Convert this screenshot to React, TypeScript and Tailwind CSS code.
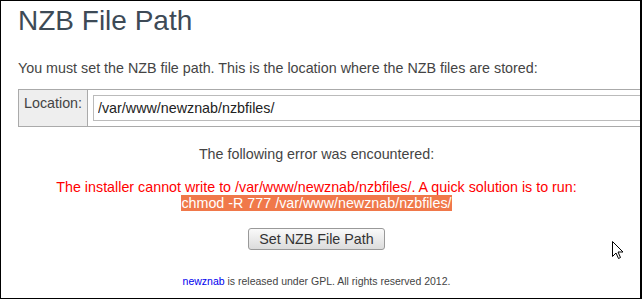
import React from "react";

export default function App() {
  return (
    <div className="relative h-[301px] w-[643px] overflow-hidden bg-white font-['Liberation_Sans',Arial,sans-serif]">
      <div className="h-[299px] w-[642px] overflow-hidden border border-r-2 border-black">
        <div className="pl-[17px]">
          <h1 className="pt-[3px] text-[28px] leading-[33px] text-[#3d4a56]">NZB File Path</h1>

          <p className="mt-[23px] text-[14.3px] leading-[16px] text-[#444]">
            You must set the NZB file path. This is the location where the NZB files are stored:
          </p>

          <div className="mt-[13px] flex h-[38px] w-[700px] border border-[#aaa]">
            <div className="flex w-[69px] shrink-0 items-start border-r border-[#aaa] bg-[#eee] pl-[5px] pt-[5px] text-[14.3px] leading-[16px] text-[#444]">
              Location:
            </div>
            <div className="flex-1 px-[5px] py-[5px]">
              <input
                readOnly
                value="/var/www/newznab/nzbfiles/"
                className="h-[26px] w-full border border-[#bbb] bg-white px-[4px] text-[14.3px] text-[#222] outline-none"
              />
            </div>
          </div>
        </div>

        <div className="pr-[8px] text-center">
          <p className="mt-[19px] text-[14.3px] leading-[16px] text-[#444]">The following error was encountered:</p>
          <p className="mt-[17px] text-[14.3px] leading-[16px] text-[#ff0000]">
            The installer cannot write to /var/www/newznab/nzbfiles/. A quick solution is to run:
            <br />
            <span className="bg-[#f0784a] text-white">chmod -R 777 /var/www/newznab/nzbfiles/</span>
          </p>
          <button className="mt-[17px] h-[22px] rounded-[3px] border border-[#999] bg-gradient-to-b from-[#fafafa] to-[#dcdcdc] px-[10px] text-[14.3px] leading-[20px] text-[#333]">
            Set NZB File Path
          </button>
          <p className="mt-[24px] text-[10.5px] leading-[12px] text-[#444]">
            <span className="text-[#0000ee]">newznab</span> is released under GPL. All rights reserved 2012.
          </p>
        </div>
      </div>

      <svg className="absolute left-[612px] top-[241px]" width="12" height="19" viewBox="0 0 12 19">
        <path d="M0.5 0.5 L0.5 15.5 L4 12 L6.5 17.5 L8.5 16.5 L6 11 L11 11 Z" fill="white" stroke="black" strokeWidth="1" />
      </svg>
    </div>
  );
}
